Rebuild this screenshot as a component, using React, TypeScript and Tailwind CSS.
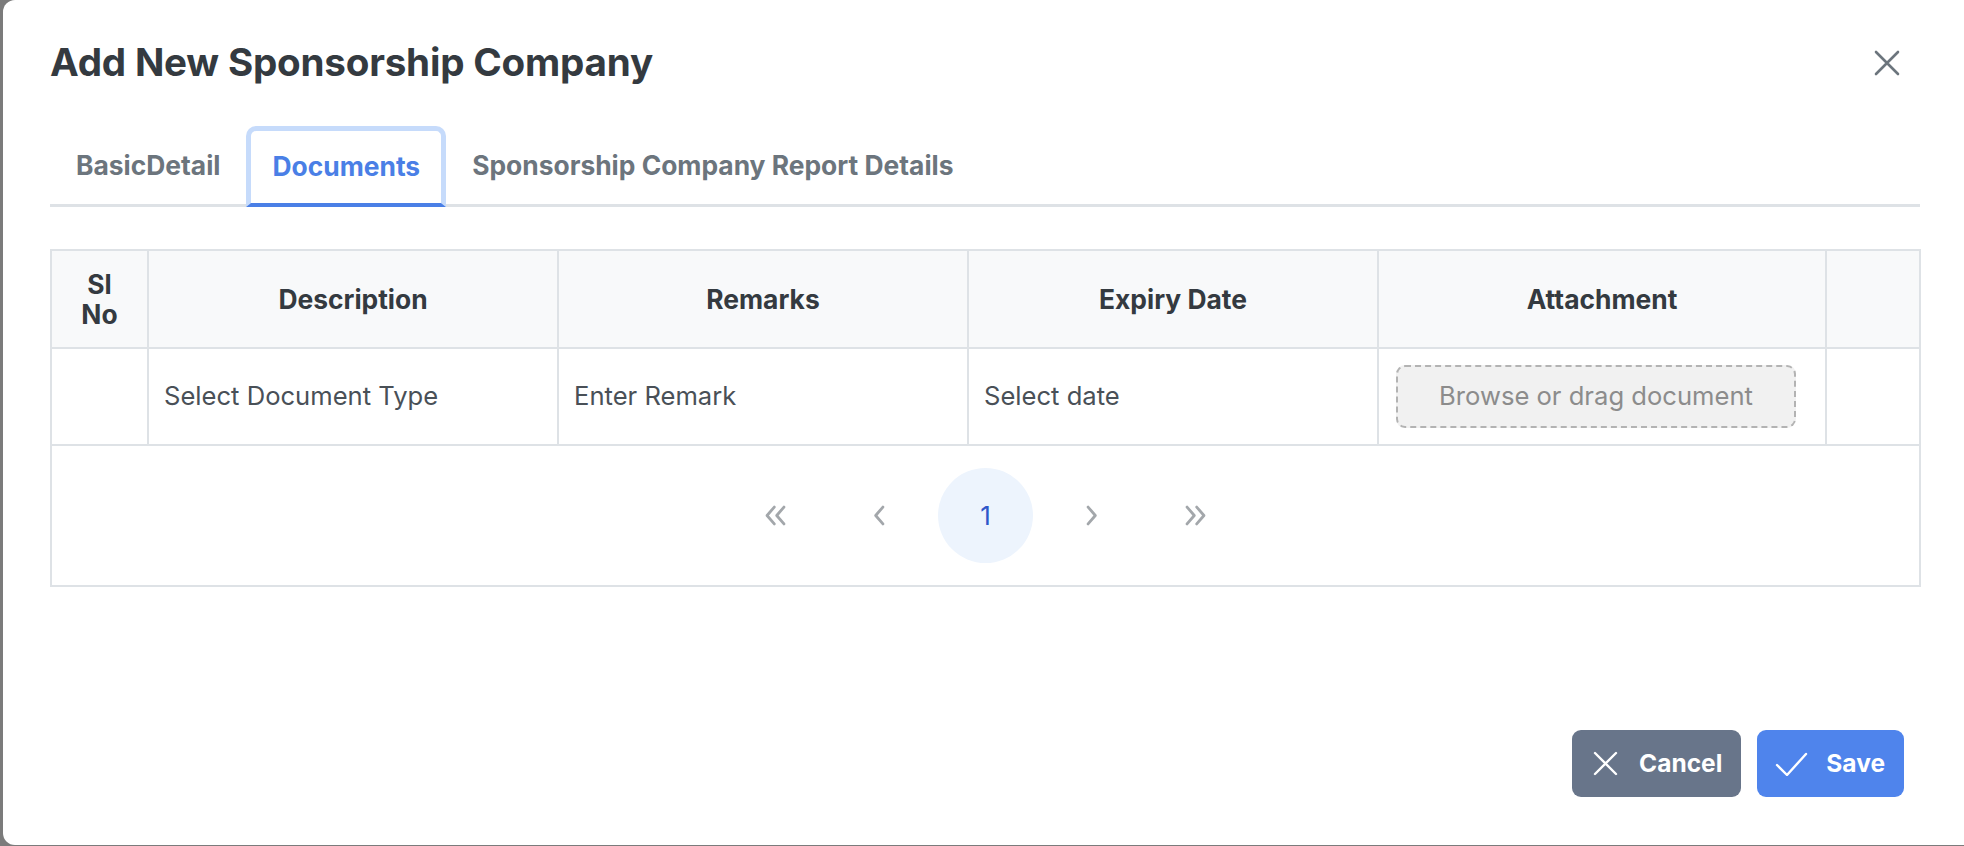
import React from "react";

const font = "font-['Inter','Liberation_Sans',sans-serif]";

const columns = [
  { label: "Sl No", width: "w-[97px]" },
  { label: "Description", width: "w-[410px]" },
  { label: "Remarks", width: "w-[410px]" },
  { label: "Expiry Date", width: "w-[410px]" },
  { label: "Attachment", width: "w-[448px]" },
  { label: "", width: "w-[94px]" },
];

function Chevron({ dir, double }: { dir: "left" | "right"; double?: boolean }) {
  const single = dir === "left" ? "M14 5l-6 7 6 7" : "M10 5l6 7-6 7";
  const pair =
    dir === "left"
      ? ["M11 5l-6 7 6 7", "M19 5l-6 7 6 7"]
      : ["M5 5l6 7-6 7", "M13 5l6 7-6 7"];
  return (
    <svg width="29" height="29" viewBox="0 0 24 24" fill="none" stroke="#a3a7ab" strokeWidth="2.3" strokeLinecap="round" strokeLinejoin="round">
      {double ? pair.map((d) => <path key={d} d={d} />) : <path d={single} />}
    </svg>
  );
}

export default function App() {
  return (
    <div className={`w-[1964px] h-[846px] overflow-hidden bg-[#7b7b7b] flex ${font}`}>
      <div className="ml-[3px] w-[1990px] h-[845px] shrink-0 bg-white rounded-[12px] flex flex-col pl-[47px] pr-[73px]">
        {/* header */}
        <div className="h-[126px] flex items-center justify-between">
          <h2 className="text-[38.6px] font-bold text-[#343a40] tracking-[-0.2px]">Add New Sponsorship Company</h2>
          <button type="button" className="mr-[20px] text-[#6c757d]">
            <svg width="26" height="26" viewBox="0 0 26 26" stroke="currentColor" strokeWidth="2.6" strokeLinecap="round">
              <path d="M2 2l22 22M24 2L2 24" />
            </svg>
          </button>
        </div>

        {/* tabs */}
        <div className="h-[81px] flex items-end border-b-[3px] border-[#dee2e6]">
          <div className="h-[78px] -mb-[3px] pb-[4px] px-[26px] flex items-center text-[26.4px] font-bold text-[#6c757d]">BasicDetail</div>
          <div className="h-[81px] -mb-[3px] pb-[1px] px-[21px] flex items-center text-[26.4px] font-bold text-[#4a7fe6] border-x-[5px] border-t-[5px] border-[#c6dbfb] rounded-t-[10px] border-b-[4px] border-b-[#4a7fe6]">
            Documents
          </div>
          <div className="h-[78px] -mb-[3px] pb-[4px] px-[26px] flex items-center text-[26.4px] font-bold text-[#6c757d]">Sponsorship Company Report Details</div>
        </div>

        {/* table */}
        <table className="mt-[42px] w-[1869px] border-collapse table-fixed">
          <thead>
            <tr className="h-[98px] bg-[#f8f9fa]">
              {columns.map((c) => (
                <th key={c.label} className={`${c.width} border-2 border-[#dee2e6] px-[18px] text-[26.4px] leading-[30px] font-bold text-[#343a40] text-center`}>
                  {c.label}
                </th>
              ))}
            </tr>
          </thead>
          <tbody>
            <tr className="h-[97px] text-[25.6px] text-[#495057]">
              <td className="border-2 border-[#dee2e6]" />
              <td className="border-2 border-[#dee2e6] px-[15px]">Select Document Type</td>
              <td className="border-2 border-[#dee2e6] px-[15px]">Enter Remark</td>
              <td className="border-2 border-[#dee2e6] px-[15px]">Select date</td>
              <td className="border-2 border-[#dee2e6] px-[17px]">
                <div className="w-[400px] h-[63px] rounded-[9px] border-2 border-dashed border-[#b3b3b3] bg-[#f1f1f1] flex items-center justify-center text-[#8c8c8c]">
                  Browse or drag document
                </div>
              </td>
              <td className="border-2 border-[#dee2e6]" />
            </tr>
            <tr className="h-[141px]">
              <td colSpan={6} className="border-2 border-[#dee2e6]">
                <div className="flex items-center justify-center gap-[10px]">
                  <span className="w-[95px] h-[95px] flex items-center justify-center"><Chevron dir="left" double /></span>
                  <span className="w-[95px] h-[95px] flex items-center justify-center"><Chevron dir="left" /></span>
                  <span className="w-[95px] h-[95px] rounded-full bg-[#edf4fd] flex items-center justify-center text-[26px] text-[#2f56c9]">1</span>
                  <span className="w-[95px] h-[95px] flex items-center justify-center"><Chevron dir="right" /></span>
                  <span className="w-[95px] h-[95px] flex items-center justify-center"><Chevron dir="right" double /></span>
                </div>
              </td>
            </tr>
          </tbody>
        </table>

        {/* footer */}
        <div className="flex-1" />
        <div className="flex justify-end gap-[16px] mr-[16px] mb-[48px]">
          <button type="button" className="h-[67px] pl-[21px] pr-[19px] rounded-[9px] bg-[#68758a] text-white text-[24.5px] font-bold flex items-center gap-[21px]">
            <svg width="25" height="25" viewBox="0 0 25 25" stroke="white" strokeWidth="2.4" strokeLinecap="round">
              <path d="M2 2l21 21M23 2L2 23" />
            </svg>
            Cancel
          </button>
          <button type="button" className="h-[67px] pl-[18px] pr-[19px] rounded-[9px] bg-[#4f84ec] text-white text-[24.5px] font-bold flex items-center gap-[18px]">
            <svg width="33" height="24" viewBox="0 0 33 24" fill="none" stroke="white" strokeWidth="2.4" strokeLinecap="round" strokeLinejoin="round">
              <path d="M2 13l10 10L31 2" />
            </svg>
            Save
          </button>
        </div>
      </div>
    </div>
  );
}
